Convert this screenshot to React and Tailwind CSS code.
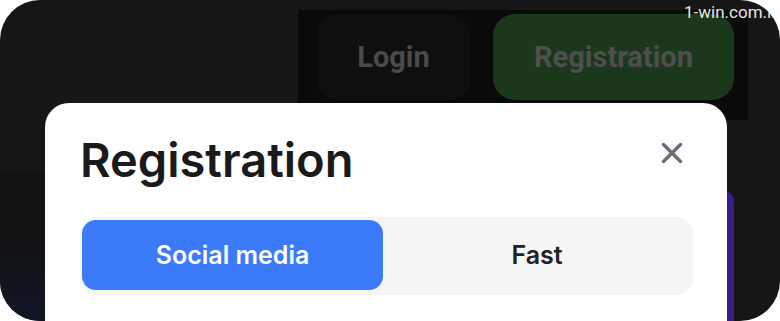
export default function App() {
  return (
    <div className="w-[780px] h-[321px] bg-white overflow-hidden">
      <div className="relative w-full h-full rounded-[40px] bg-[#161616] overflow-hidden flex flex-col">
        {/* header */}
        <div className="flex justify-end pt-[10px] pr-[32px]">
          <div className="w-[450px] h-[110px] bg-[#0a0a0a] flex items-start pt-[4px] pl-[19px] gap-[23px]">
            <div className="w-[153px] h-[86px] pt-[2px] rounded-[20px] bg-[#0f0f0f] flex items-center justify-center text-[29px] font-bold text-[#4a4a4a] font-['Roboto',sans-serif]">
              Login
            </div>
            <div className="w-[241px] h-[86px] pt-[2px] rounded-[22px] bg-[#1c381c] flex items-center justify-center text-[29px] font-bold text-[#4e4e4e] font-['Roboto',sans-serif]">
              Registration
            </div>
          </div>
        </div>
        {/* page content behind modal */}
        <div className="flex-1 flex items-stretch mt-[52px]">
          <div className="w-[400px] bg-gradient-to-b from-[#121212] via-[#111214] to-[#0f1626]" />
          <div className="flex-1" />
          <div className="w-[300px] mt-[18px] mr-[46px] rounded-tr-[12px] bg-[#3a1e8c]" />
        </div>

        {/* modal */}
        <div className="absolute left-[45px] top-[103px] w-[682px] bottom-0 bg-white rounded-t-[24px] pr-[34px] pl-[35px] pt-[33px] font-['Inter',sans-serif]">
          <div className="flex justify-between items-start">
            <h1 className="text-[47px] leading-[48px] font-semibold text-[#1a1a1a]">Registration</h1>
            <button className="w-[22px] h-[22px] mt-[6px] mr-[10px] text-[#6b6e76]">
              <svg viewBox="0 0 22 22" width="22" height="22" fill="none" stroke="currentColor" strokeWidth="3.4" strokeLinecap="round">
                <line x1="2.5" y1="2.5" x2="19.5" y2="19.5" />
                <line x1="19.5" y1="2.5" x2="2.5" y2="19.5" />
              </svg>
            </button>
          </div>
          <div className="mt-[33px] h-[78px] bg-[#f5f5f5] rounded-[16px] pt-[3px] pb-[5px] pl-[2px] pr-[2px] flex">
            <div className="w-[301px] h-full pt-[2px] rounded-[14px] bg-[#3b7af9] flex items-center justify-center text-[25px] font-semibold text-white">
              Social media
            </div>
            <div className="flex-1 pt-[2px] flex items-center justify-center text-[25px] font-semibold text-[#222222]">
              Fast
            </div>
          </div>
        </div>

        {/* watermark */}
        <div className="absolute left-[684px] top-0 text-[17px] text-[#e6e6e6] font-['Roboto',sans-serif] whitespace-nowrap">
          1-win.com.in
        </div>
      </div>
    </div>
  );
}
